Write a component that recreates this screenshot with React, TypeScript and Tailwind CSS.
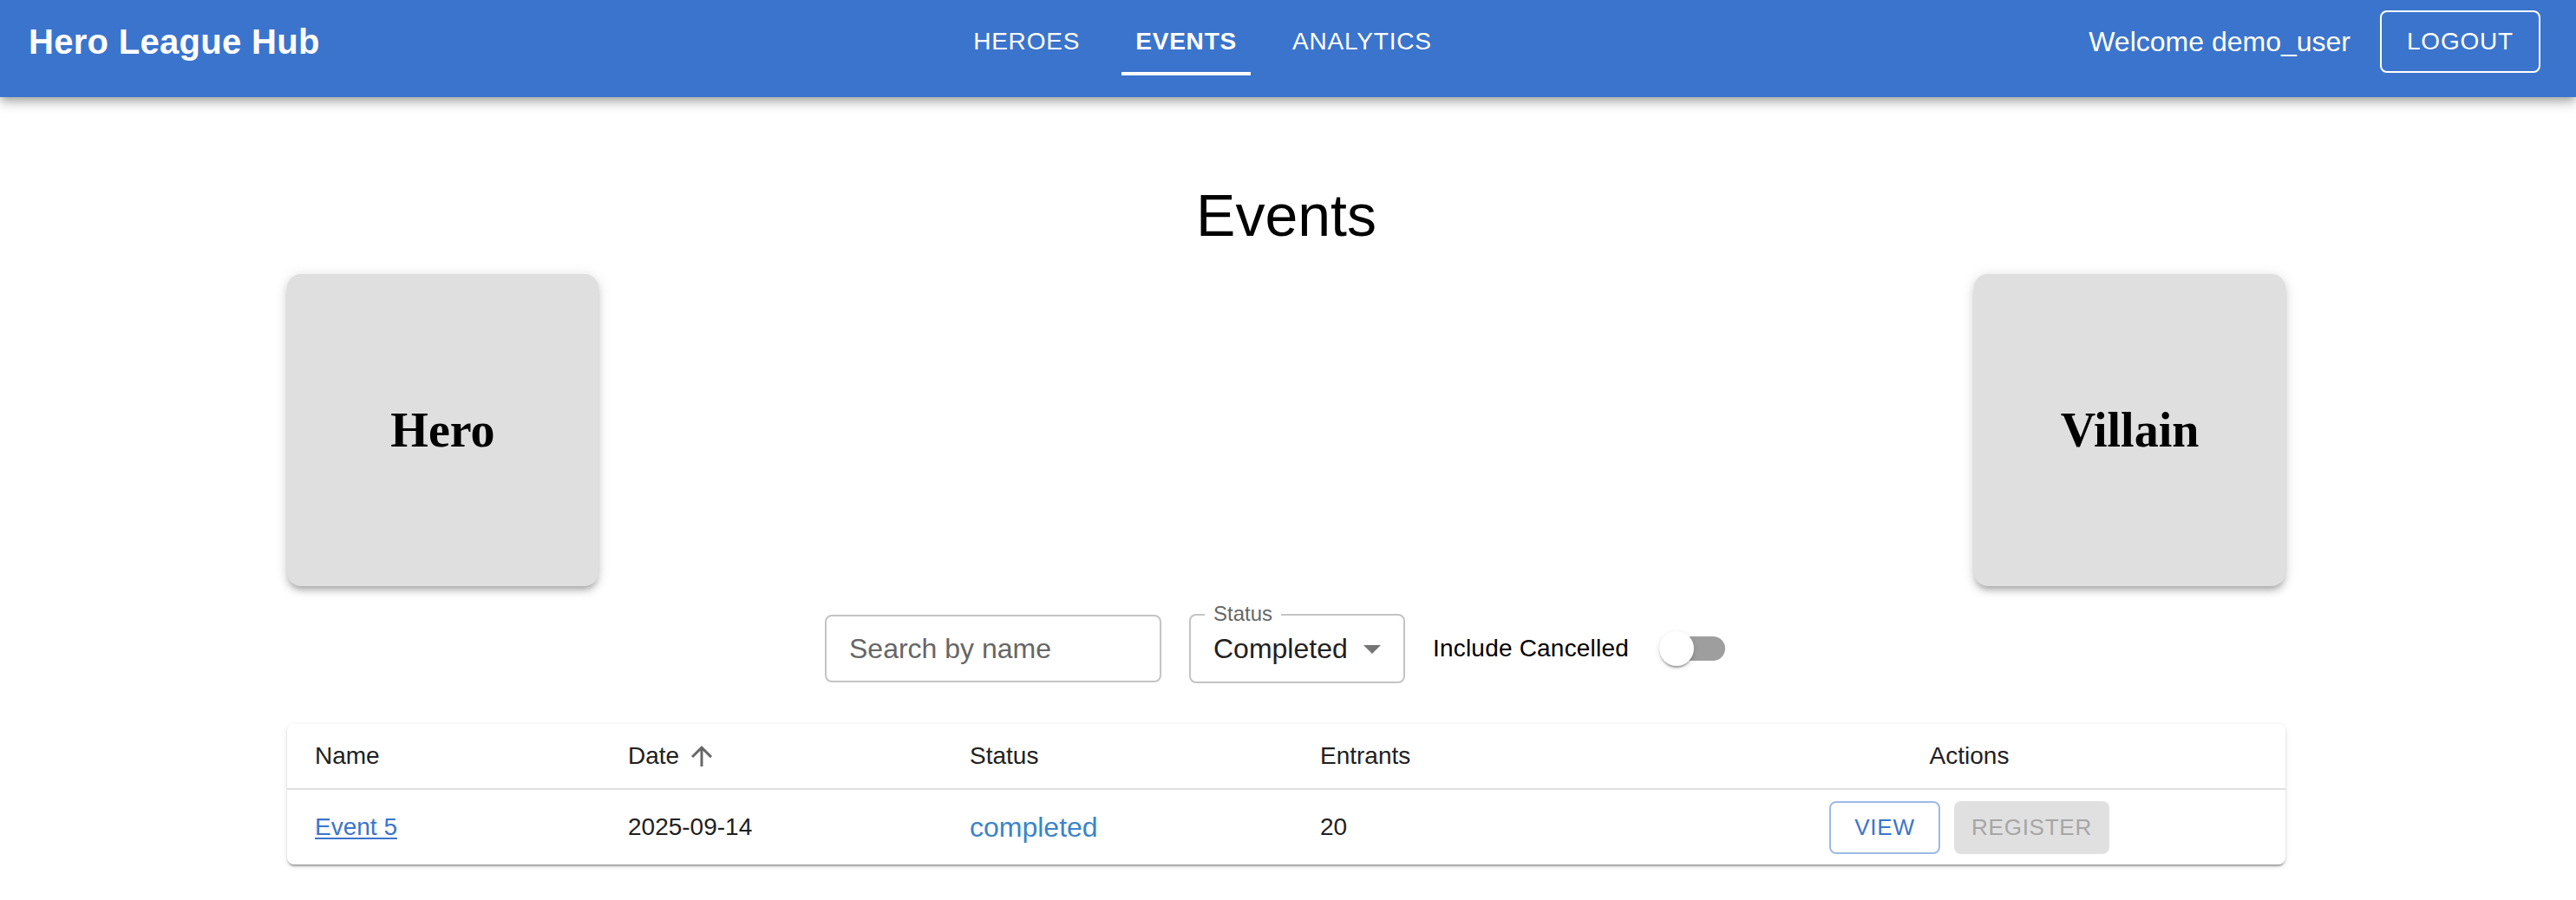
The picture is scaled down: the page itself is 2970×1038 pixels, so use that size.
import React from 'react';

const navItems = [
  { label: 'HEROES', active: false },
  { label: 'EVENTS', active: true },
  { label: 'ANALYTICS', active: false },
];

function Header() {
  return (
    <header className="h-[112px] bg-[#3b74cc] shadow-[0_4px_8px_-2px_rgba(0,0,0,0.2),0_8px_10px_0_rgba(0,0,0,0.14),0_2px_20px_0_rgba(0,0,0,0.12)] relative z-10">
      <div className="flex h-[96px] items-center pl-[33px] pr-[41px] text-white">
        <div className="text-[40px] font-bold leading-[48px] tracking-[0.3px]">Hero League Hub</div>
        <nav className="flex flex-1 justify-center gap-[32px] self-start pr-[4px]">
          {navItems.map((item) => (
            <div
              key={item.label}
              className={
                item.active
                  ? 'flex h-[87px] items-center border-b-[4px] border-white px-[16px] pt-[13px] text-[28px] font-bold tracking-[0.8px]'
                  : 'flex h-[87px] items-center border-b-[4px] border-transparent px-[16px] pt-[13px] text-[28px] tracking-[0.8px]'
              }
            >
              {item.label}
            </div>
          ))}
        </nav>
        <div className="flex items-center gap-[34px]">
          <span className="text-[32px]">Welcome demo_user</span>
          <button className="flex h-[72px] w-[185px] items-center justify-center rounded-[8px] border-2 border-white text-[28px] tracking-[0.8px]">
            LOGOUT
          </button>
        </div>
      </div>
    </header>
  );
}

function SideCard({ title }: { title: string }) {
  return (
    <div className="flex h-[360px] w-[359px] items-center justify-center rounded-[16px] bg-[#dfdfdf] shadow-[0_6px_6px_-4px_rgba(0,0,0,0.2),0_6px_8px_0_rgba(0,0,0,0.14),0_2px_16px_0_rgba(0,0,0,0.12)]">
      <span className="font-['Liberation_Serif','Times_New_Roman',serif] text-[56px] font-bold text-black">
        {title}
      </span>
    </div>
  );
}

function Filters() {
  return (
    <div className="mt-[33px] flex h-[78px] items-center justify-center pr-[4px]">
      <div className="flex h-[78px] w-[388px] items-center rounded-[8px] border-2 border-[#c4c4c4] px-[26px] text-[32px] text-[#666666]">
        Search by name
      </div>
      <div className="relative ml-[32px] flex h-[80px] w-[249px] items-center rounded-[8px] border-2 border-[#c4c4c4] pl-[26px] text-[32px] text-[#212121]">
        <span className="absolute left-[16px] -top-[16px] bg-white px-[10px] text-[24px] leading-[28px] text-[#666666]">
          Status
        </span>
        <span>Completed</span>
        <svg className="absolute right-[12px] top-[14px] h-[48px] w-[48px]" viewBox="0 0 24 24" fill="#757575">
          <path d="M7 10l5 5 5-5z" />
        </svg>
      </div>
      <div className="ml-[32px] text-[28px] tracking-[0.2px] text-black">Include Cancelled</div>
      <div className="relative ml-[17px] h-[76px] w-[116px]">
        <div className="absolute left-[24px] top-[24px] h-[28px] w-[70px] rounded-full bg-[#9e9e9e]" />
        <div className="absolute left-[18px] top-[18px] h-[40px] w-[40px] rounded-full bg-white shadow-[0_4px_2px_-2px_rgba(0,0,0,0.2),0_2px_2px_0_rgba(0,0,0,0.14),0_2px_6px_0_rgba(0,0,0,0.12)]" />
      </div>
    </div>
  );
}

function EventsTable() {
  return (
    <div className="mt-[48px] overflow-hidden rounded-[8px] bg-white shadow-[0_4px_2px_-2px_rgba(0,0,0,0.2),0_2px_2px_0_rgba(0,0,0,0.14),0_2px_6px_0_rgba(0,0,0,0.12)]">
      <div className="grid h-[76px] grid-cols-[361px_394px_404px_416px_1fr] items-center border-b-2 border-[#e0e0e0] text-[28px] text-[#212121]">
        <div className="px-[32px]">Name</div>
        <div className="flex items-center px-[32px]">
          <span>Date</span>
          <svg className="ml-[8px] h-[36px] w-[36px]" viewBox="0 0 24 24" fill="#666666">
            <path d="M4 12l1.41 1.41L11 7.83V20h2V7.83l5.58 5.59L20 12l-8-8-8 8z" />
          </svg>
        </div>
        <div className="px-[32px]">Status</div>
        <div className="px-[32px]">Entrants</div>
        <div className="px-[32px] text-center">Actions</div>
      </div>
      <div className="grid h-[86px] grid-cols-[361px_394px_404px_416px_1fr] items-center text-[28px] text-[#212121]">
        <div className="px-[32px]">
          <a className="text-[#3b74cc] underline decoration-[2px] underline-offset-[3px]">Event 5</a>
        </div>
        <div className="px-[32px]">2025-09-14</div>
        <div className="px-[32px] text-[32px] text-[#3a84c9]">completed</div>
        <div className="px-[32px]">20</div>
        <div className="flex justify-center gap-[16px] px-[32px]">
          <button className="flex h-[61px] w-[128px] items-center justify-center rounded-[8px] border-2 border-[#9dbae6] text-[26px] tracking-[0.74px] text-[#3b74cc]">
            VIEW
          </button>
          <button className="flex h-[61px] w-[179px] items-center justify-center rounded-[8px] bg-[#e0e0e0] text-[26px] tracking-[0.74px] text-[#a6a6a6]">
            REGISTER
          </button>
        </div>
      </div>
    </div>
  );
}

export default function App() {
  return (
    <div className="min-h-[1038px] w-[2970px] bg-white font-['Liberation_Sans',Arial,sans-serif]">
      <Header />
      <main className="ml-[331px] w-[2304px] pt-[94px]">
        <h1 className="mb-[26px] text-center text-[68px] font-normal leading-[84px] text-black">Events</h1>
        <div className="flex justify-between">
          <SideCard title="Hero" />
          <SideCard title="Villain" />
        </div>
        <Filters />
        <EventsTable />
      </main>
    </div>
  );
}
